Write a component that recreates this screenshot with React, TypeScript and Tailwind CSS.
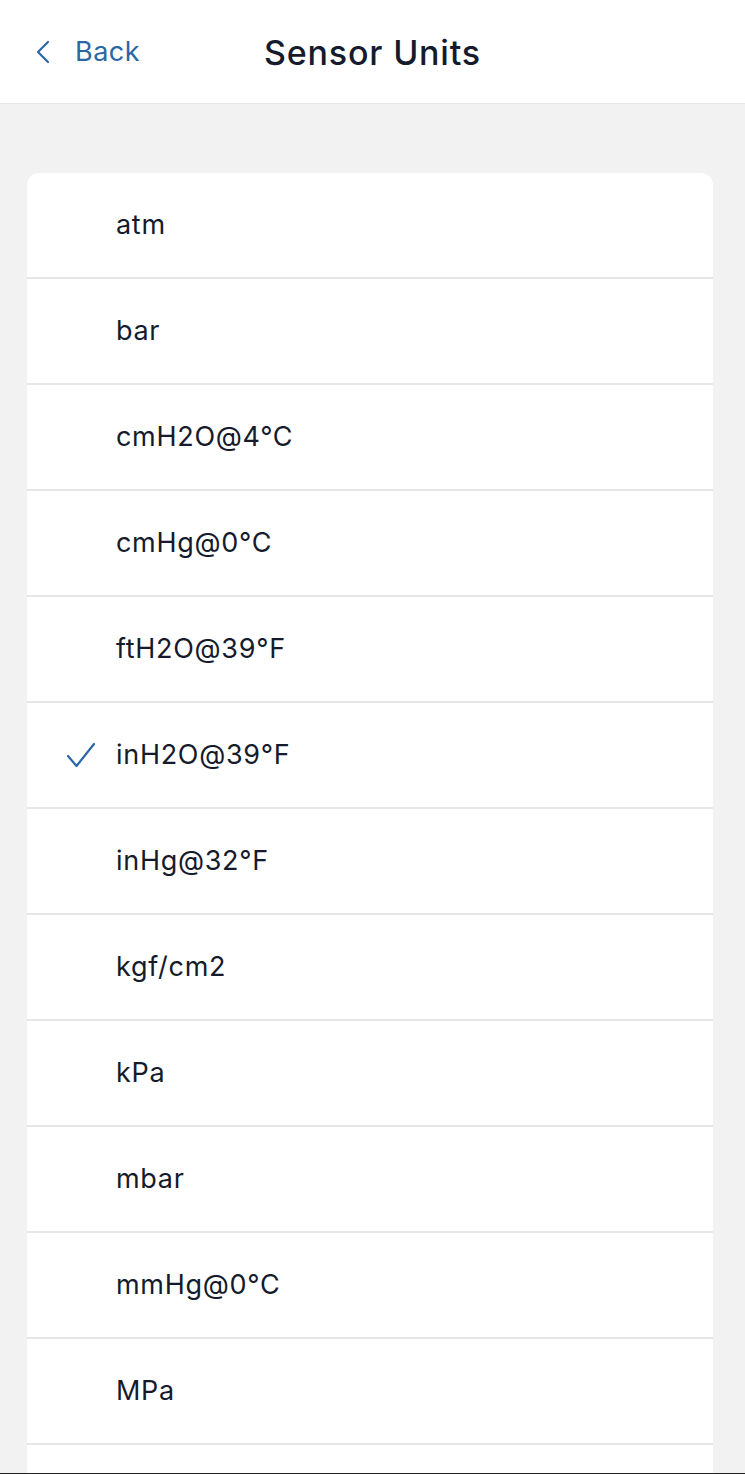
import React from 'react'

const units = [
  'atm',
  'bar',
  'cmH2O@4°C',
  'cmHg@0°C',
  'ftH2O@39°F',
  'inH2O@39°F',
  'inHg@32°F',
  'kgf/cm2',
  'kPa',
  'mbar',
  'mmHg@0°C',
  'MPa',
  'psi',
]

const selected = 'inH2O@39°F'

export default function App() {
  return (
    <div
      className="h-[1474px] flex flex-col overflow-hidden bg-[#f2f2f2]"
      style={{ fontFamily: 'Inter, "Noto Sans", sans-serif' }}
    >
      {/* Header */}
      <div className="h-[104px] shrink-0 bg-white border-b border-[#e4e6e7] relative flex items-center justify-center">
        <button className="absolute left-[34px] top-[34px] flex items-center gap-[23px] text-[#2b66a5]">
          <svg width="18" height="26" viewBox="0 0 18 26" fill="none">
            <path d="M14 3 L4 13 L14 23" stroke="currentColor" strokeWidth="2.2" strokeLinecap="round" strokeLinejoin="round" />
          </svg>
          <span className="text-[27px] leading-[36px] tracking-[0.5px]">Back</span>
        </button>
        <h1 className="text-[34px] font-medium text-[#151b2c] tracking-[0.8px] pt-[2px]">Sensor Units</h1>
      </div>

      {/* List */}
      <div className="flex-1 overflow-hidden pt-[69px] px-[27px]">
        <div className="bg-white rounded-t-[12px] w-[686px]">
          {units.map((u) => (
            <div key={u} className="h-[106px] flex items-center border-b-2 border-[#e6e6e6]">
              <div className="w-[89px] flex justify-end pr-[20px]">
                {u === selected && (
                  <svg width="30" height="26" viewBox="0 0 30 26" fill="none">
                    <path d="M2 14 L10.5 24 L28 2" stroke="#2b66a5" strokeWidth="2.2" strokeLinecap="round" strokeLinejoin="round" />
                  </svg>
                )}
              </div>
              <span className="text-[27px] tracking-[0.7px] text-[#151b2c]">{u}</span>
            </div>
          ))}
        </div>
      </div>
      <div className="h-px shrink-0 bg-[#222]" />
    </div>
  )
}
